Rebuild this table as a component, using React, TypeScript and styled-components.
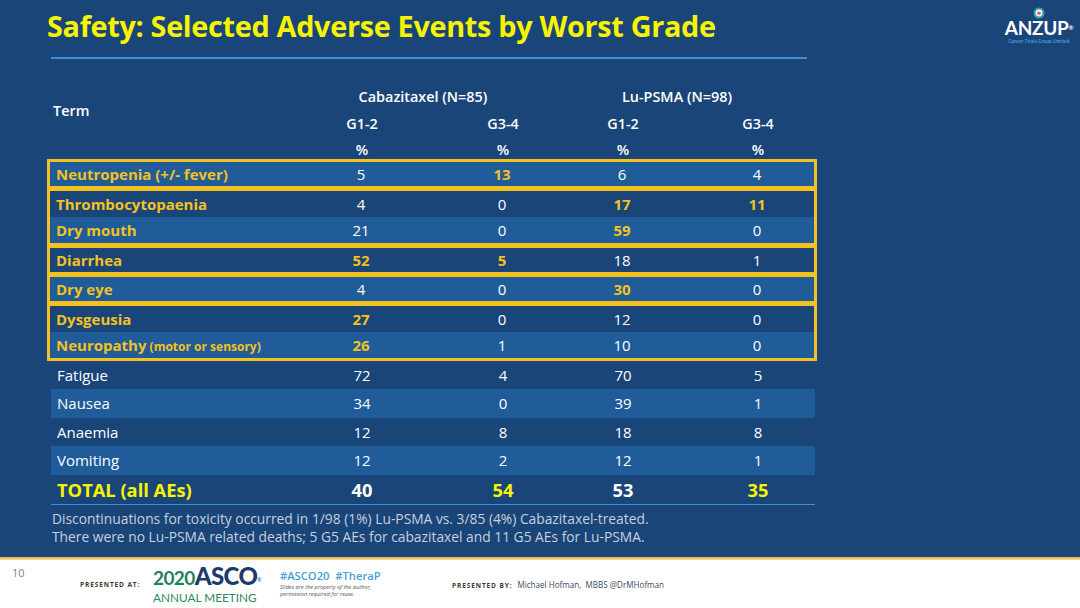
import styled, { createGlobalStyle } from 'styled-components';

const GlobalStyle = createGlobalStyle`
  body {
    margin: 0;
    background: #ffffff;
  }
`;

type Item = {
  term: string;
  sub?: string;
  vals: number[];
  hl: boolean[];
  shade: boolean;
};

const groups: Item[][] = [
  [{ term: 'Neutropenia (+/- fever)', vals: [5, 13, 6, 4], hl: [false, true, false, false], shade: true }],
  [
    { term: 'Thrombocytopaenia', vals: [4, 0, 17, 11], hl: [false, false, true, true], shade: false },
    { term: 'Dry mouth', vals: [21, 0, 59, 0], hl: [false, false, true, false], shade: true },
  ],
  [{ term: 'Diarrhea', vals: [52, 5, 18, 1], hl: [true, true, false, false], shade: false }],
  [{ term: 'Dry eye', vals: [4, 0, 30, 0], hl: [false, false, true, false], shade: true }],
  [
    { term: 'Dysgeusia', vals: [27, 0, 12, 0], hl: [true, false, false, false], shade: false },
    { term: 'Neuropathy', sub: '(motor or sensory)', vals: [26, 1, 10, 0], hl: [true, false, false, false], shade: true },
  ],
];

const others: Item[] = [
  { term: 'Fatigue', vals: [72, 4, 70, 5], hl: [false, false, false, false], shade: false },
  { term: 'Nausea', vals: [34, 0, 39, 1], hl: [false, false, false, false], shade: true },
  { term: 'Anaemia', vals: [12, 8, 18, 8], hl: [false, false, false, false], shade: false },
  { term: 'Vomiting', vals: [12, 2, 12, 1], hl: [false, false, false, false], shade: true },
];

const totals = [
  { v: 40, y: false },
  { v: 54, y: true },
  { v: 53, y: false },
  { v: 35, y: true },
];

export default function App() {
  return (
    <>
      <GlobalStyle />
      <Slide>
        <Main>
          <Header>
            <Title>Safety: Selected Adverse Events by Worst Grade</Title>
            <Logo>
              <svg width="12" height="12" viewBox="0 0 12 12">
                <circle cx="6" cy="6" r="5.5" fill="#2aa6b8" />
                <circle cx="6" cy="6" r="3.4" fill="#ffffff" />
                <circle cx="6" cy="6.3" r="1.8" fill="#d9637a" />
              </svg>
              <LogoWord>
                ANZUP<LogoMark>®</LogoMark>
              </LogoWord>
              <LogoSub>Cancer Trials Group Limited</LogoSub>
            </Logo>
          </Header>

          <Content>
            <Rule />
            <TableHead>
              <HeadTerm>Term</HeadTerm>
              <ArmTitle $col={2} $shift={19}>Cabazitaxel (N=85)</ArmTitle>
              <ArmTitle $col={4} $shift={-3}>Lu-PSMA (N=98)</ArmTitle>
              <HeadCell $col={2} $row={2}>G1-2</HeadCell>
              <HeadCell $col={3} $row={2}>G3-4</HeadCell>
              <HeadCell $col={4} $row={2}>G1-2</HeadCell>
              <HeadCell $col={5} $row={2}>G3-4</HeadCell>
              <Pct $col={2}>%</Pct>
              <Pct $col={3}>%</Pct>
              <Pct $col={4}>%</Pct>
              <Pct $col={5}>%</Pct>
            </TableHead>

            {groups.map((group, gi) => (
              <Group key={gi}>
                {group.map((it) => (
                  <Row key={it.term} $shade={it.shade} $h={group.length > 1 ? 26 : 24}>
                    <Term $hl>
                      {it.term}
                      {it.sub && <TermSub> {it.sub}</TermSub>}
                    </Term>
                    {it.vals.map((v, i) => (
                      <Num key={i} $hl={it.hl[i]}>
                        {v}
                      </Num>
                    ))}
                  </Row>
                ))}
              </Group>
            ))}

            {others.map((it) => (
              <Row key={it.term} $shade={it.shade} $h={28.5}>
                <Term>{it.term}</Term>
                {it.vals.map((v, i) => (
                  <Num key={i}>{v}</Num>
                ))}
              </Row>
            ))}

            <TotalRow>
              <TotalTerm>TOTAL (all AEs)</TotalTerm>
              {totals.map((t, i) => (
                <TotalNum key={i} $yellow={t.y}>
                  {t.v}
                </TotalNum>
              ))}
            </TotalRow>

            <Notes>
              <p>Discontinuations for toxicity occurred in 1/98 (1%) Lu-PSMA vs. 3/85 (4%) Cabazitaxel-treated.</p>
              <p>There were no Lu-PSMA related deaths; 5 G5 AEs for cabazitaxel and 11 G5 AEs for Lu-PSMA.</p>
            </Notes>
          </Content>
        </Main>

        <GoldStrip />

        <Footer>
          <PageNo>10</PageNo>
          <Caps>PRESENTED AT:</Caps>
          <Asco>
            <AscoTop>
              <AscoYear>2020</AscoYear>
              <AscoName>ASCO</AscoName>
              <AscoReg>®</AscoReg>
            </AscoTop>
            <AscoMeeting>ANNUAL MEETING</AscoMeeting>
          </Asco>
          <Tags>
            <TagLine>#ASCO20&nbsp; #TheraP</TagLine>
            <Fine>
              Slides are the property of the author,
              <br />
              permission required for reuse.
            </Fine>
          </Tags>
          <Presenter>
            <Caps>PRESENTED BY:</Caps>
            <PresenterName>Michael Hofman, &nbsp;MBBS @DrMHofman</PresenterName>
          </Presenter>
        </Footer>
      </Slide>
    </>
  );
}

const COLS = '212px 198px 84px 156px 114px';
const GOLD = '#f4c21f';
const LINE = '#3b8ed8';

const Slide = styled.div`
  width: 1080px;
  height: 608px;
  display: flex;
  flex-direction: column;
  overflow: hidden;
  font-family: 'Open Sans', 'Noto Sans', sans-serif;
`;

const Main = styled.div`
  flex: 1;
  background: #1a4579;
  display: flex;
  flex-direction: column;
`;

const Header = styled.div`
  height: 57px;
  display: flex;
  justify-content: space-between;
  align-items: flex-start;
`;

const Title = styled.h1`
  margin: 6px 0 0 47px;
  font-size: 28.8px;
  font-weight: 700;
  letter-spacing: -0.3px;
  color: #f8f400;
`;

const Logo = styled.div`
  margin: 7px 8px 0 0;
  width: 66px;
  display: flex;
  flex-direction: column;
  align-items: center;
`;

const LogoWord = styled.div`
  margin-top: -1px;
  color: #ffffff;
  font-family: 'Lato', sans-serif;
  font-weight: 700;
  font-size: 19px;
  line-height: 20px;
  letter-spacing: -0.3px;
`;

const LogoMark = styled.span`
  font-size: 6px;
  vertical-align: bottom;
`;

const LogoSub = styled.div`
  color: #3f9ad6;
  font-size: 4.4px;
  font-weight: 700;
  white-space: nowrap;
`;

const Content = styled.div`
  margin-left: 51px;
  width: 764px;
`;

const Rule = styled.div`
  width: 756px;
  height: 1.5px;
  background: ${LINE};
`;

const TableHead = styled.div`
  margin-top: 24px;
  display: grid;
  grid-template-columns: ${COLS};
  grid-template-rows: 27px 28px 22px;
  align-items: center;
  color: #ffffff;
  font-size: 14.4px;
  font-weight: 600;
`;

const HeadTerm = styled.div`
  grid-column: 1;
  grid-row: 1 / span 2;
  padding-left: 2px;
`;

const ArmTitle = styled.div<{ $col: number; $shift: number }>`
  grid-column: ${(p) => p.$col} / span 2;
  grid-row: 1;
  text-align: center;
  transform: translateX(${(p) => p.$shift}px);
  white-space: nowrap;
`;

const HeadCell = styled.div<{ $col: number; $row: number }>`
  grid-column: ${(p) => p.$col};
  grid-row: ${(p) => p.$row};
  text-align: center;
`;

const Pct = styled.div<{ $col: number }>`
  grid-column: ${(p) => p.$col};
  grid-row: 3;
  align-self: end;
  margin-bottom: 3px;
  line-height: 14px;
  text-align: center;
`;

const Group = styled.div`
  margin: -1px -2px 0 -4px;
  border: 3px solid ${GOLD};

  &:first-of-type {
    margin-top: 0;
  }
`;

const Row = styled.div<{ $shade: boolean; $h: number }>`
  display: grid;
  grid-template-columns: ${COLS};
  align-items: center;
  height: ${(p) => p.$h}px;
  background: ${(p) => (p.$shade ? '#1f5c99' : 'transparent')};
  color: #ffffff;
  font-size: 15px;
`;

const Term = styled.div<{ $hl?: boolean }>`
  padding-left: 6px;
  white-space: nowrap;
  color: ${(p) => (p.$hl ? GOLD : '#ffffff')};
  font-weight: ${(p) => (p.$hl ? 700 : 400)};
`;

const TermSub = styled.span`
  font-size: 12px;
`;

const Num = styled.div<{ $hl?: boolean }>`
  text-align: center;
  color: ${(p) => (p.$hl ? GOLD : '#ffffff')};
  font-weight: ${(p) => (p.$hl ? 700 : 400)};
`;

const TotalRow = styled.div`
  display: grid;
  grid-template-columns: ${COLS};
  align-items: center;
  height: 29px;
  border-bottom: 1.5px solid ${LINE};
  font-size: 18.3px;
  font-weight: 700;
`;

const TotalTerm = styled.div`
  padding-left: 6px;
  color: #f8f400;
  white-space: nowrap;
`;

const TotalNum = styled.div<{ $yellow: boolean }>`
  text-align: center;
  color: ${(p) => (p.$yellow ? '#f8f400' : '#ffffff')};
`;

const Notes = styled.div`
  margin-top: 5px;
  padding-left: 1px;
  color: #c7d0df;
  font-size: 13.8px;
  line-height: 18.5px;
  white-space: nowrap;

  p {
    margin: 0;
  }
`;

const GoldStrip = styled.div`
  height: 3px;
  background: linear-gradient(#d9b54a, #f3df9a);
`;

const Footer = styled.div`
  height: 48px;
  background: #ffffff;
  display: grid;
  grid-template-columns: 68px 73px 127px 172px auto;
  align-items: center;
  padding-left: 12px;
`;

const PageNo = styled.div`
  align-self: start;
  margin-top: 5px;
  color: #7f7f7f;
  font-size: 11px;
`;

const Caps = styled.span`
  color: #3a3a3a;
  font-size: 6.5px;
  font-weight: 700;
  letter-spacing: 0.9px;
`;

const Asco = styled.div`
  display: flex;
  flex-direction: column;
  align-items: flex-start;
  margin-top: 1px;
`;

const AscoTop = styled.div`
  display: flex;
  align-items: baseline;
  line-height: 22px;
`;

const AscoYear = styled.span`
  color: #23825a;
  font-family: 'Lato', sans-serif;
  font-weight: 700;
  font-size: 19px;
  letter-spacing: -0.6px;
`;

const AscoName = styled.span`
  color: #1c3b6c;
  font-family: 'Lato', sans-serif;
  font-weight: 900;
  font-size: 24px;
  letter-spacing: -0.6px;
`;

const AscoReg = styled.span`
  align-self: flex-start;
  color: #1c3b6c;
  font-size: 5px;
  margin-top: 4px;
`;

const AscoMeeting = styled.div`
  color: #2a8a60;
  font-family: 'Lato', sans-serif;
  font-size: 11.8px;
  line-height: 13px;
`;

const Tags = styled.div`
  display: flex;
  flex-direction: column;
  gap: 1px;
  margin-top: -3px;
`;

const TagLine = styled.div`
  color: #4b9fd4;
  font-size: 11.2px;
  font-weight: 600;
`;

const Fine = styled.div`
  color: #555555;
  font-size: 5.6px;
  font-style: italic;
  line-height: 7px;
`;

const Presenter = styled.div`
  display: flex;
  align-items: baseline;
  gap: 5px;
`;

const PresenterName = styled.span`
  color: #3b4a63;
  font-size: 8.1px;
`;
